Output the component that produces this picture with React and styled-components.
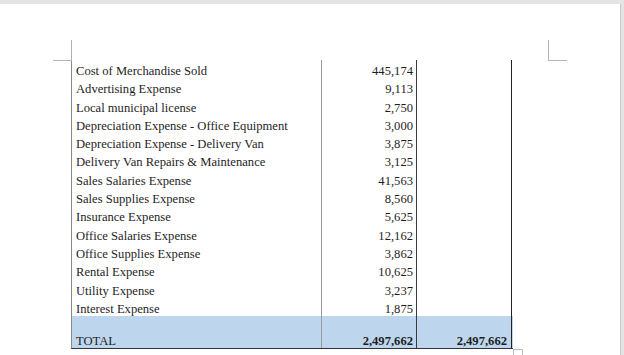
import React from 'react';
import styled, { createGlobalStyle } from 'styled-components';

const Global = createGlobalStyle`
  html, body {
    margin: 0;
    padding: 0;
    background: #e4e4e4;
    overflow: hidden;
  }
`;

const Viewport = styled.div`
  width: 624px;
  height: 355px;
  padding-top: 4px;
  box-sizing: border-box;
  overflow: hidden;
`;

const Page = styled.div`
  position: relative;
  width: 621px;
  height: 351px;
  background: #fff;
  border-right: 1px solid #c9c9c9;
  box-sizing: border-box;
  padding: 56px 0 0 71px;
  font-family: "Liberation Serif", "Times New Roman", serif;
  font-size: 12.6px;
  color: #1e1e1e;
`;

const CropMark = styled.div`
  position: absolute;
  top: 36px;
  left: ${p => p.$left}px;
  width: 18px;
  height: 20px;
  border-bottom: 1px solid #b4b4b4;
  ${p => p.$side === 'left'
    ? 'border-right: 1px solid #b4b4b4;'
    : 'border-left: 1px solid #b4b4b4;'}
`;

const Table = styled.div`
  width: 441px;
  border-left: 1px solid #8a8a8a;
  border-bottom: 1px solid #333;
`;

const Row = styled.div`
  display: grid;
  grid-template-columns: 250px 95px 95px;
  height: ${p => (p.$total ? '32px' : '18.3px')};
  line-height: 14.3px;
  background: ${p => (p.$total ? '#bdd6ee' : 'transparent')};
  font-weight: ${p => (p.$total ? 700 : 400)};
`;

const Label = styled.div`
  padding-left: 4px;
  display: flex;
  align-items: flex-end;
  border-right: 1px solid #9a9a9a;
  white-space: nowrap;
  font-weight: 400;
`;

const Amount = styled.div`
  display: flex;
  align-items: flex-end;
  justify-content: flex-end;
  padding-right: ${p => p.$pad}px;
  border-right: 1px solid ${p => p.$line};
`;

const Handle = styled.div`
  position: absolute;
  left: 513px;
  top: 345px;
  width: 8px;
  height: 8px;
  border: 1px solid #bdbdbd;
  background: #fff;
`;

const items = [
  ['Cost of Merchandise Sold', '445,174'],
  ['Advertising Expense', '9,113'],
  ['Local municipal license', '2,750'],
  ['Depreciation Expense - Office Equipment', '3,000'],
  ['Depreciation Expense - Delivery Van', '3,875'],
  ['Delivery Van Repairs & Maintenance', '3,125'],
  ['Sales Salaries Expense', '41,563'],
  ['Sales Supplies Expense', '8,560'],
  ['Insurance Expense', '5,625'],
  ['Office Salaries Expense', '12,162'],
  ['Office Supplies Expense', '3,862'],
  ['Rental Expense', '10,625'],
  ['Utility Expense', '3,237'],
  ['Interest Expense', '1,875'],
];

export default function App() {
  return (
    <Viewport>
      <Global />
      <Page>
        <CropMark $side="left" $left={53} />
        <CropMark $side="right" $left={548} />
        <Table>
          {items.map(([label, value]) => (
            <Row key={label}>
              <Label>{label}</Label>
              <Amount $pad={3} $line="#3a3a3a">{value}</Amount>
              <Amount $pad={4} $line="#222" />
            </Row>
          ))}
          <Row $total>
            <Label>TOTAL</Label>
            <Amount $pad={3} $line="#3a3a3a">2,497,662</Amount>
            <Amount $pad={4} $line="#222">2,497,662</Amount>
          </Row>
        </Table>
        <Handle />
      </Page>
    </Viewport>
  );
}
